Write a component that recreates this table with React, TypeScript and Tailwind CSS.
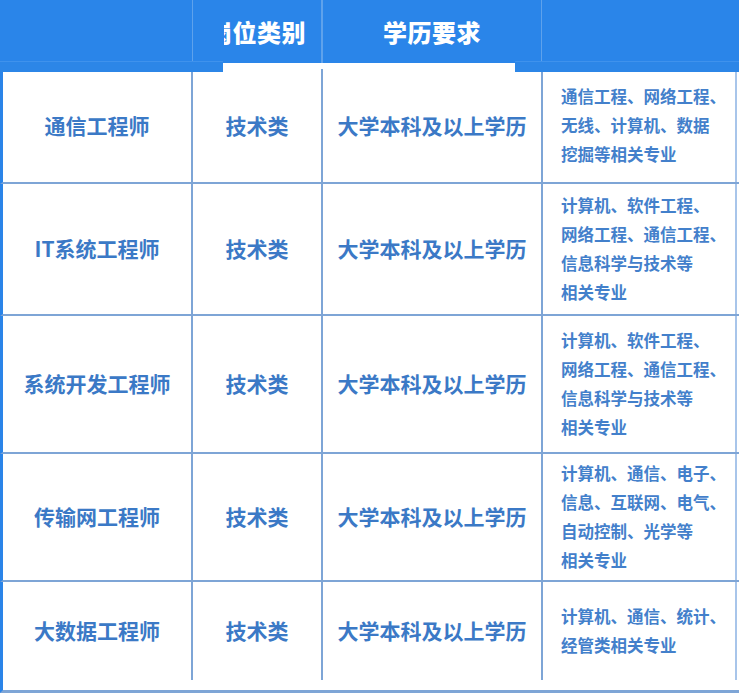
import * as React from "react";

const rows = [
  {
    title: "通信工程师",
    h: "h-[121px] pt-[6px]",
    majors: ["通信工程、网络工程、", "无线、计算机、数据", "挖掘等相关专业"],
  },
  {
    title: "IT系统工程师",
    h: "h-[132px]",
    majors: ["计算机、软件工程、", "网络工程、通信工程、", "信息科学与技术等", "相关专业"],
  },
  {
    title: "系统开发工程师",
    h: "h-[138px]",
    majors: ["计算机、软件工程、", "网络工程、通信工程、", "信息科学与技术等", "相关专业"],
  },
  {
    title: "传输网工程师",
    h: "h-[128px]",
    majors: ["计算机、通信、电子、", "信息、互联网、电气、", "自动控制、光学等", "相关专业"],
  },
  {
    title: "大数据工程师",
    h: "h-[111px] pb-[10px] border-b-[3px] border-b-[#2a84e8]",
    majors: ["计算机、通信、统计、", "经管类相关专业"],
  },
];

const font = { fontFamily: '"Noto Sans CJK SC", "Noto Sans", sans-serif' };

export default function App() {
  return (
    <div className="relative w-[739px] h-[693px] bg-white overflow-hidden" style={font}>
      <Header />
      <div className="flex flex-col">
        {rows.map((r, i) => (
          <Row key={i} {...r} />
        ))}
      </div>

      {/* blue strips under the header */}
      <div className="absolute left-0 top-[61px] w-[223px] h-[11px] bg-[#2c86e7] border-t border-[#3f92ec]" />
      <div className="absolute left-[515px] top-[61px] w-[224px] h-[11px] bg-[#2c86e7] border-t border-[#3f92ec]" />
    </div>
  );
}

const Header = () => {
  return (
    <div className="flex h-[63px] bg-[#2a85e9] text-white font-black text-[24px]">
      <div className="w-[193px] border-r border-[#5ea2ec]" />
      <div className="relative w-[130px] flex items-center justify-center border-r-2 border-[#5ea2ec]">
        <span className="tracking-[0.5px]">岗位类别</span>
        <div className="absolute left-0 top-0 w-[31px] h-full bg-[#2a85e9]" />
      </div>
      <div className="w-[219px] flex items-center justify-center border-r border-[#5ea2ec]">
        <span className="tracking-[0.5px]">学历要求</span>
      </div>
      <div className="flex-1" />
    </div>
  );
};

const Row = (props: { title: string; h: string; majors: string[] }) => {
  const { title, h, majors } = props;
  return (
    <div
      className={`flex ${h} border-l-[3px] border-l-[#2a84e8] border-b-2 border-b-[#7ea5d6] text-[#3b79c6] font-bold`}
    >
      <div className="w-[190px] shrink-0 flex items-center justify-center border-r-2 border-[#7ea5d6] text-[21px]">
        {title}
      </div>
      <div className="w-[130px] shrink-0 flex items-center justify-center border-r-2 border-[#7ea5d6] text-[21px]">
        技术类
      </div>
      <div className="w-[220px] shrink-0 flex items-center justify-center border-r-2 border-[#7ea5d6] text-[21px]">
        大学本科及以上学历
      </div>
      <div className="w-[194px] shrink-0 flex flex-col justify-center pl-[18px] border-r-2 border-[#a8c5ea] text-[16.5px] leading-[29px] text-[#4380cb]">
        {majors.map((m, i) => (
          <span key={i} className="whitespace-nowrap">
            {m}
          </span>
        ))}
      </div>
    </div>
  );
};
